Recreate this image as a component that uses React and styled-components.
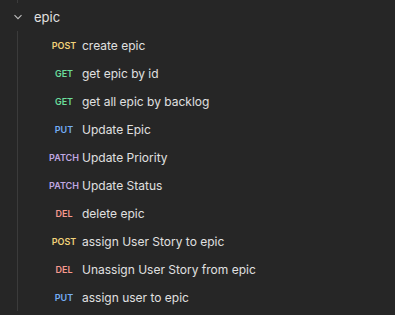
import React from "react";
import styled, { createGlobalStyle } from "styled-components";

const Global = createGlobalStyle`
  html, body { margin: 0; padding: 0; background: #262626; }
  body { font-family: Inter, "Noto Sans", sans-serif; -webkit-font-smoothing: antialiased; }
`;

const Sidebar = styled.div`
  width: 395px;
  height: 315px;
  background: #262626;
  overflow: hidden;
`;

const Guide = styled.div`
  margin-left: 17px;
  border-left: 1px solid #3b3b3b;
  height: ${(p) => p.$h}px;
`;

const FolderRow = styled.div`
  display: flex;
  align-items: center;
  height: 28px;
  color: #e0e0e0;
  font-size: 13px;
`;

const ChevronWrap = styled.span`
  width: 34px;
  display: flex;
  align-items: center;
  padding-left: 13px;
  box-sizing: border-box;
`;

const Children = styled.div`
  margin-left: 17px;
  border-left: 1px solid #3b3b3b;
  height: 280px;
  display: flex;
  flex-direction: column;
`;

const Row = styled.div`
  display: flex;
  align-items: center;
  height: 28px;
  padding-left: 31px;
`;

const Method = styled.span`
  width: 30px;
  text-align: center;
  font-size: 9px;
  font-weight: 600;
  color: ${(p) => p.$color};
  margin-right: 3px;
`;

const Name = styled.span`
  color: #e0e0e0;
  font-size: 12px;
  white-space: nowrap;
`;

const COLORS = {
  POST: "#f1d27a",
  GET: "#6bdd9a",
  PUT: "#74aef6",
  PATCH: "#c0a8e1",
  DEL: "#f79a8e",
};

const items = [
  ["POST", "create epic"],
  ["GET", "get epic by id"],
  ["GET", "get all epic by backlog"],
  ["PUT", "Update Epic"],
  ["PATCH", "Update Priority"],
  ["PATCH", "Update Status"],
  ["DEL", "delete epic"],
  ["POST", "assign User Story to epic"],
  ["DEL", "Unassign User Story from epic"],
  ["PUT", "assign user to epic"],
];

export default function App() {
  return (
    <Sidebar>
      <Global />
      <Guide $h={3} />
      <FolderRow>
        <ChevronWrap>
          <svg width="10" height="10" viewBox="0 0 10 10" fill="none">
            <path d="M1.5 3.2 L5 6.7 L8.5 3.2" stroke="#bdbdbd" strokeWidth="1.1" />
          </svg>
        </ChevronWrap>
        epic
      </FolderRow>
      <Children>
        {items.map(([m, n], i) => (
          <Row key={i}>
            <Method $color={COLORS[m]}>{m}</Method>
            <Name>{n}</Name>
          </Row>
        ))}
      </Children>
    </Sidebar>
  );
}
